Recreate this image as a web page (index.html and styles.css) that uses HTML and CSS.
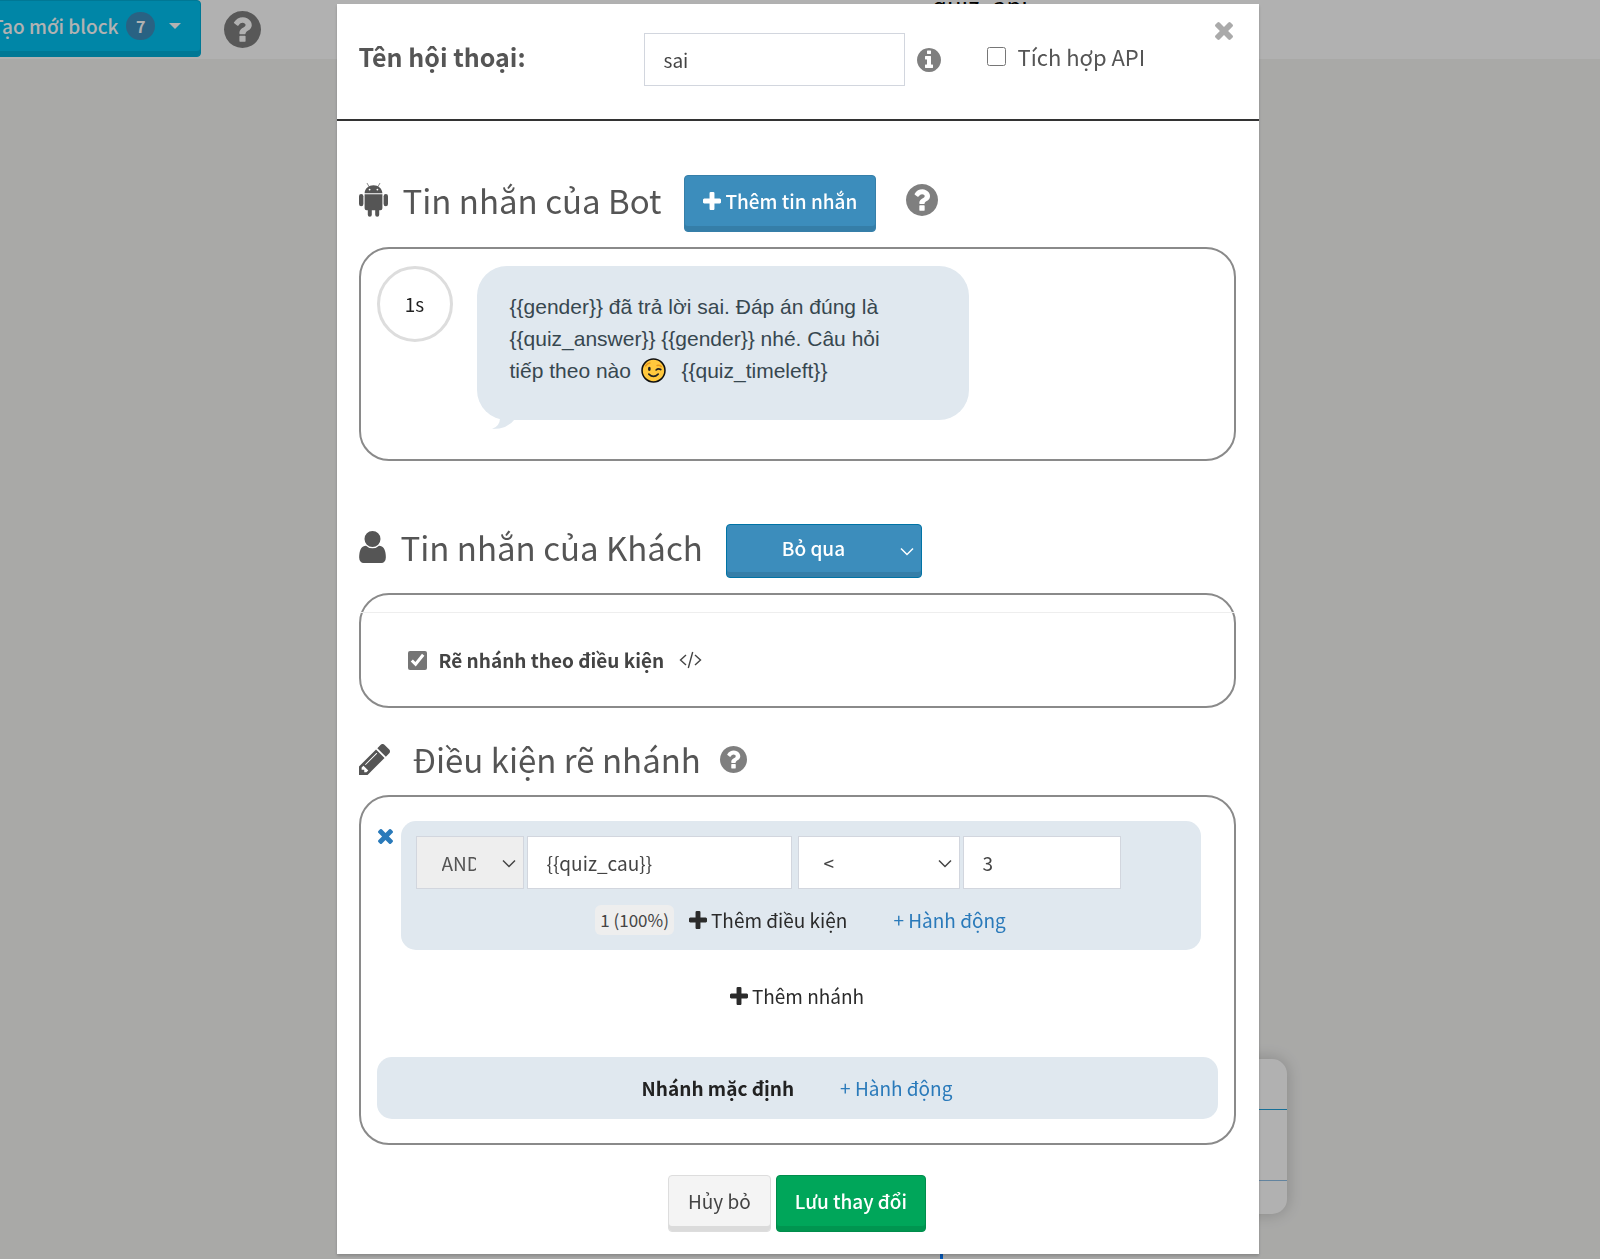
FILE: index.html
```html
<!DOCTYPE html>
<html lang="vi">
<head>
  <meta charset="UTF-8">
  <title>Hội thoại</title>
  <meta name="viewport" content="width=device-width, initial-scale=1.0">
  <link rel="stylesheet" href="styles.css">
</head>
<body>
  <svg class="sprite" aria-hidden="true">
    <symbol id="i-question" viewBox="128 128 1536 1536">
      <path d="M1024 1376v-192q0-14-9-23t-23-9h-192q-14 0-23 9t-9 23v192q0 14 9 23t23 9h192q14 0 23-9t9-23zm256-672q0-88-55.5-163t-138.500-116-170-41q-243 0-371 213-15 24 8 42l132 100q7 6 19 6 16 0 25-12 53-68 86-92 34-24 86-24 48 0 85.500 26t37.500 59q0 38-20 61t-68 45q-63 28-115.500 86.500t-52.500 125.500v36q0 14 9 23t23 9h192q14 0 23-9t9-23q0-19 21.500-49.500t54.500-49.500q32-18 49-28.500t46-35 44.500-48 28-60.500 12.500-81zm384 192q0 209-103 385.500t-279.500 279.500-385.500 103-385.500-103-279.500-279.500-103-385.500 103-385.500 279.500-279.500 385.500-103 385.500 103 279.500 279.500 103 385.500z"/>
    </symbol>
    <symbol id="i-info" viewBox="128 128 1536 1536">
      <path d="M1152 1376v-160q0-14-9-23t-23-9h-96v-512q0-14-9-23t-23-9h-320q-14 0-23 9t-9 23v160q0 14 9 23t23 9h96v320h-96q-14 0-23 9t-9 23v160q0 14 9 23t23 9h448q14 0 23-9t9-23zm-128-896v-160q0-14-9-23t-23-9h-192q-14 0-23 9t-9 23v160q0 14 9 23t23 9h192q14 0 23-9t9-23zm640 416q0 209-103 385.500t-279.500 279.500-385.500 103-385.500-103-279.500-279.500-103-385.500 103-385.500 279.500-279.500 385.500-103 385.500 103 279.500 279.500 103 385.500z"/>
    </symbol>
    <symbol id="i-plus" viewBox="192 128 1408 1408">
      <path d="M1600 736v192q0 40-28 68t-68 28h-416v416q0 40-28 68t-68 28h-192q-40 0-68-28t-28-68v-416h-416q-40 0-68-28t-28-68v-192q0-40 28-68t68-28h416v-416q0-40 28-68t68-28h192q40 0 68 28t28 68v416h416q40 0 68 28t28 68z"/>
    </symbol>
    <symbol id="i-times" viewBox="302 366 1188 1188">
      <path d="M1490 1322q0 40-28 68l-136 136q-28 28-68 28t-68-28l-294-294-294 294q-28 28-68 28t-68-28l-136-136q-28-28-28-68t28-68l294-294-294-294q-28-28-28-68t28-68l136-136q28-28 68-28t68 28l294 294 294-294q28-28 68-28t68 28l136 136q28 28 28 68t-28 68l-294 294 294 294q28 28 28 68z"/>
    </symbol>
    <symbol id="i-user" viewBox="256 128 1280 1536">
      <path d="M1536 1399q0 109-62.500 187t-150.500 78h-854q-88 0-150.500-78t-62.500-187q0-85 8.500-160.500t31.500-152 58.500-131 94-89 134.500-34.500q131 128 313 128t313-128q76 0 134.500 34.500t94 89 58.500 131 31.500 152 8.500 160.500zm-256-887q0 159-112.500 271.500t-271.500 112.500-271.500-112.500-112.500-271.500 112.500-271.500 271.500-112.500 271.500 112.500 112.500 271.500z"/>
    </symbol>
    <symbol id="i-pencil" viewBox="128 150 1515 1515">
      <path d="M491 1536l91-91-235-235-91 91v107h128v128h107zm523-928q0-22-22-22-10 0-17 7l-542 542q-7 7-7 17 0 22 22 22 10 0 17-7l542-542q7-7 7-17zm-54-192l416 416-832 832h-416v-416zm683 96q0 53-37 90l-166 166-416-416 166-165q36-38 90-38 53 0 91 38l235 234q37 39 37 91z"/>
    </symbol>
    <symbol id="i-android" viewBox="0 0 29 34">
      <path d="M8.200.4l1.700 3" fill="none" stroke="currentColor" stroke-width=".7" stroke-linecap="round"/>
      <path d="M20.800.4l-1.700 3" fill="none" stroke="currentColor" stroke-width=".7" stroke-linecap="round"/>
      <path fill-rule="evenodd" d="M5.600 10.300c.2-5 4.200-8 8.900-8s8.700 3 8.900 8zM10.600 5.700a.9.900 0 1 0 0 1.800.9.900 0 1 0 0-1.800zM18.400 5.700a.9.900 0 1 0 0 1.800.9.900 0 1 0 0-1.800z"/>
      <path d="M5.600 11.200h17.800v14q0 2-2 2h-1.200v4.600a2 2 0 0 1-4 0v-4.600h-3.400v4.600a2 2 0 0 1-4 0v-4.600h-1.200q-2 0-2-2z"/>
      <rect x="0" y="11" width="4.400" height="12.200" rx="2.200"/>
      <rect x="24.600" y="11" width="4.400" height="12.200" rx="2.200"/>
    </symbol>
    <symbol id="i-code" viewBox="0 0 23 18">
      <path d="M7 4L1.500 9 7 14M16 4l5.500 5L16 14M13.700 1L9.300 17" fill="none" stroke="currentColor" stroke-width="1.400"/>
    </symbol>
    <symbol id="i-chevron" viewBox="0 0 14 9">
      <path d="M1 1.500l6 6 6-6" fill="none" stroke="currentColor" stroke-width="1.500"/>
    </symbol>
    <symbol id="i-wink" viewBox="0 0 24 24">
      <circle cx="12" cy="12" r="11" fill="#ffc83d" stroke="#111" stroke-width="1.500"/>
      <path d="M4.500 7.500q1.500-2.500 4-2.700M15.500 7.200q2-.7 4 1" fill="none" stroke="#e8961e" stroke-width="1.500" stroke-linecap="round"/>
      <ellipse cx="8" cy="10.500" rx="1.300" ry="2" fill="#222"/>
      <path d="M14.500 11.500q2-2 4.500-.4M7.500 15.500q4.500 4.500 9 0" fill="none" stroke="#222" stroke-width="1.600" stroke-linecap="round"/>
    </symbol>
  </svg>

  <!-- editor page under the dialog -->
  <div class="page">
    <header class="topbar">
      <button class="btn btn-info btn-create" type="button">
        Tạo mới block <span class="badge">7</span><span class="caret"></span>
      </button>
      <svg class="icon help-lg"><use href="#i-question"/></svg>
    </header>
    <main class="canvas">
      <span class="node-name">quiz_api</span>
      <div class="node">
        <div class="node-title"></div>
        <div class="node-body"></div>
      </div>
      <span class="wire"></span>
    </main>
  </div>

  <div class="overlay">
    <form class="modal" role="dialog" aria-label="Hội thoại">
      <div class="modal-header">
        <label class="title" for="ten">Tên hội thoại:</label>
        <input class="field" type="text" id="ten" value="sai">
        <svg class="icon info"><use href="#i-info"/></svg>
        <label class="api"><input type="checkbox"> Tích hợp API</label>
        <button class="close" type="button" aria-label="Đóng"><svg class="icon"><use href="#i-times"/></svg></button>
      </div>

      <div class="modal-body">
        <div class="section-head head-bot">
          <svg class="icon android"><use href="#i-android"/></svg>
          <h3>Tin nhắn của Bot</h3>
          <button class="btn btn-primary" type="button"><svg class="icon plus"><use href="#i-plus"/></svg>Thêm tin nhắn</button>
          <svg class="icon help-md"><use href="#i-question"/></svg>
        </div>
        <div class="box box-bot">
          <span class="delay">1s</span>
          <div class="bubble">
            {{gender}} đã trả lời sai. Đáp án đúng là<br>
            {{quiz_answer}} {{gender}} nhé. Câu hỏi<br>
            tiếp theo nào <svg class="emoji"><use href="#i-wink"/></svg> &nbsp;{{quiz_timeleft}}
            <svg class="tail" viewBox="0 0 24 12"><path d="M8 0Q8 8 0 11Q16 11 23 1L23 0Z"/></svg>
          </div>
        </div>

        <div class="section-head head-guest">
          <svg class="icon user"><use href="#i-user"/></svg>
          <h3>Tin nhắn của Khách</h3>
          <span class="select select-primary">
            <select aria-label="Tin nhắn của Khách"><option>Bỏ qua</option></select>
            <svg class="chevron"><use href="#i-chevron"/></svg>
          </span>
        </div>
        <div class="box box-guest">
          <hr>
          <label class="branch"><input type="checkbox" checked> Rẽ nhánh theo điều kiện <svg class="icon code"><use href="#i-code"/></svg></label>
        </div>

        <div class="section-head head-branch">
          <svg class="icon pencil"><use href="#i-pencil"/></svg>
          <h3>Điều kiện rẽ nhánh</h3>
          <svg class="icon help-sm"><use href="#i-question"/></svg>
        </div>
        <div class="box box-branch">
          <div class="rule">
            <button class="remove" type="button" aria-label="Xóa nhánh"><svg class="icon"><use href="#i-times"/></svg></button>
            <div class="panel">
              <div class="fields">
                <span class="select select-and">
                  <select aria-label="Phép nối" disabled><option>AND</option></select>
                  <svg class="chevron"><use href="#i-chevron"/></svg>
                </span>
                <input class="field variable" type="text" aria-label="Biến" value="{{quiz_cau}}">
                <span class="select select-op">
                  <select aria-label="So sánh"><option>&lt;</option></select>
                  <svg class="chevron"><use href="#i-chevron"/></svg>
                </span>
                <input class="field value" type="text" aria-label="Giá trị" value="3">
              </div>
              <div class="actions">
                <span class="chip">1 (100%)</span>
                <button class="add" type="button"><svg class="icon plus"><use href="#i-plus"/></svg>Thêm điều kiện</button>
                <a class="action" href="#">+ Hành động</a>
              </div>
            </div>
          </div>
          <button class="add add-branch" type="button"><svg class="icon plus"><use href="#i-plus"/></svg>Thêm nhánh</button>
          <div class="default">
            <strong>Nhánh mặc định</strong>
            <a class="action" href="#">+ Hành động</a>
          </div>
        </div>

        <div class="modal-footer">
          <button class="btn btn-default" type="button">Hủy bỏ</button>
          <button class="btn btn-success" type="submit">Lưu thay đổi</button>
        </div>
      </div>
    </form>
  </div>
</body>
</html>
```

FILE: styles.css
```css
* {
  box-sizing: border-box;
}

body {
  margin: 0;
  font-family: "Source Sans Pro", "Noto Sans CJK JP", "Noto Sans", sans-serif;
  font-size: 19px;
  line-height: 28px;
  color: #333;
}

button, input, select {
  font: inherit;
  color: inherit;
  margin: 0;
}

button {
  cursor: pointer;
}

a {
  color: #2a7aba;
  text-decoration: none;
}

.sprite {
  position: absolute;
  width: 0;
  height: 0;
}

.icon {
  display: block;
  flex: none;
  fill: currentColor;
}

/* page under the dialog */
.page {
  display: flex;
  flex-direction: column;
  height: 100vh;
  overflow: hidden;
}

.topbar {
  display: flex;
  align-items: flex-start;
  height: 59px;
  background-color: #fefefe;
}

.canvas {
  position: relative;
  flex: 1;
  background-color: #f2f2f0;
}

.help-lg {
  width: 37px;
  height: 37px;
  margin: 11px 0 0 23px;
  color: #7f7f7f;
}

.node-name {
  position: absolute;
  left: 932px;
  top: -68px;
  font-size: 24px;
  color: #000;
}

.node {
  position: absolute;
  left: 940px;
  top: 1000px;
  width: 347px;
  height: 155px;
  border-radius: 15px;
  background-color: #fefefe;
  box-shadow: 0 0 16px rgba(0, 0, 0, 0.2);
}

.node-title {
  height: 51px;
  border-bottom: 1px solid #22a0d8;
}

.node-body {
  height: 71px;
  border-bottom: 1px solid #8ebde4;
}

.wire {
  position: absolute;
  left: 940px;
  bottom: 0;
  width: 3px;
  height: 20px;
  background-color: #0a7bff;
}

/* buttons */
.btn {
  display: flex;
  align-items: center;
  justify-content: center;
  height: 57px;
  padding: 0 18px 5px;
  border: 1px solid transparent;
  border-radius: 4px;
  box-shadow: inset 0 -5px 0 rgba(0, 0, 0, 0.1);
  font-weight: 500;
  color: #fff;
  white-space: nowrap;
}

.btn-info {
  background-color: #00c0ef;
  border-color: #00acd6;
}

.btn-create {
  width: 210px;
  margin-left: -9px;
  padding: 0 19px 6px 0;
  justify-content: flex-end;
}

.badge {
  margin: 0 12px 0 8px;
  width: 31px;
  border-radius: 14px;
  background-color: #3c8dbc;
  font-size: 16px;
  font-weight: bold;
  text-align: center;
}

.btn-create .badge {
  margin-right: 14px;
}

.caret {
  border: 6px solid transparent;
  border-top-color: #fff;
  border-bottom: 0;
}

.btn-primary {
  background-color: #3c8dbc;
  border-color: #367fa9;
}

.btn-default {
  padding: 0 19px 5px;
  background-color: #f4f4f4;
  border-color: #ddd;
  font-weight: normal;
  color: #444;
}

.btn-success {
  background-color: #00a65a;
  border-color: #008d4c;
}

.plus {
  width: 18px;
  height: 18px;
  margin-right: 4px;
}

/* dialog */
.overlay {
  position: fixed;
  inset: 0;
  overflow: auto;
  padding: 4px 5px 4px 0;
  background-color: rgba(0, 0, 0, 0.3);
}

.modal {
  max-width: 922px;
  margin: 0 auto;
  background-color: #fff;
  box-shadow: 0 2px 3px rgba(0, 0, 0, 0.2);
}

.modal-header {
  position: relative;
  display: flex;
  align-items: center;
  padding: 29px 23px 33px 22px;
  border-bottom: 2px solid #333;
}

.title {
  width: 285px;
  padding-bottom: 7px;
  font-size: 25px;
  font-weight: bold;
  color: #555;
}

.field {
  width: 261px;
  height: 53px;
  padding: 0 19px;
  border: 1px solid #d2d6de;
  border-radius: 0;
  background-color: #fff;
  color: #444;
}

.info {
  width: 24px;
  height: 24px;
  margin-left: 12px;
  color: #7f7f7f;
}

.api {
  display: flex;
  align-items: center;
  gap: 12px;
  margin-left: 46px;
  padding-bottom: 7px;
  font-size: 22px;
  color: #555;
}

input[type="checkbox"] {
  width: 19px;
  height: 19px;
  accent-color: #757575;
}

.close {
  position: absolute;
  top: 18px;
  right: 26px;
  padding: 0;
  border: 0;
  background: none;
  color: #aaa;
}

.close .icon {
  width: 18px;
  height: 18px;
}

.modal-body {
  padding: 0 23px 22px 22px;
}

.section-head {
  display: flex;
  align-items: center;
  color: #555;
}

.section-head h3 {
  margin: 0 23px 0 15px;
  font-size: 33px;
  line-height: 44px;
  font-weight: normal;
}

/* the controls hang below the heading line */
.section-head .btn,
.section-head .select {
  margin-bottom: -8px;
}

.head-bot {
  margin: 54px 0 23px;
}

.head-guest {
  margin: 63px 0 23px;
}

.head-branch {
  margin: 29px 0 14px;
}

.head-branch h3 {
  margin: 0 19px 0 23px;
}

.android {
  width: 29px;
  height: 34px;
}

.user {
  width: 27px;
  height: 32px;
}

.pencil {
  width: 31px;
  height: 31px;
}

.help-md {
  width: 32px;
  height: 32px;
  margin-left: 30px;
  color: #7f7f7f;
}

.help-sm {
  width: 27px;
  height: 27px;
  color: #7f7f7f;
}

.box {
  border: 2px solid #8a8a8a;
  border-radius: 30px;
}

.box-bot {
  display: flex;
  align-items: flex-start;
  gap: 24px;
  padding: 17px 16px 39px;
}

.delay {
  width: 76px;
  height: 76px;
  border: 3px solid #ddd;
  border-radius: 50%;
  line-height: 69px;
  text-align: center;
  color: #222;
}

.bubble {
  position: relative;
  width: 492px;
  padding: 25px 33px 33px;
  border-radius: 30px;
  background-color: #e0e8ef;
  font-family: "Liberation Sans", Arial, sans-serif;
  font-size: 21px;
  line-height: 32px;
  color: #37474f;
}

.emoji {
  width: 25px;
  height: 25px;
  margin: 0 4px;
  vertical-align: -5px;
}

.tail {
  position: absolute;
  left: 15px;
  top: 100%;
  margin-top: -2px;
  width: 24px;
  height: 12px;
  fill: #e0e8ef;
}

/* drop-downs */
.select {
  position: relative;
  display: block;
  flex: none;
  height: 53px;
  color: #444;
}

.select select {
  appearance: none;
  width: 100%;
  height: 100%;
  padding: 0 47px 0 25px;
  border: 1px solid #d2d6de;
  border-radius: 0;
  background-color: #fff;
  opacity: 1;
}

.chevron {
  position: absolute;
  right: 8px;
  top: 23px;
  width: 14px;
  height: 9px;
  pointer-events: none;
}

.select-primary {
  width: 196px;
  height: 54px;
  color: #fff;
}

.select-primary select {
  padding: 0 46px 6px 55px;
  border-color: #0073a5;
  border-radius: 4px;
  background-color: #3c8dbc;
  box-shadow: inset 0 -5px 0 rgba(0, 0, 0, 0.1);
  font-weight: 500;
}

.box-guest {
  padding: 17px 0 24px;
}

.box-guest hr {
  margin: 0;
  border: 0;
  border-top: 1px solid #eee;
}

.branch {
  display: flex;
  align-items: center;
  gap: 12px;
  margin: 33px 0 0 47px;
  padding-bottom: 8px;
  font-weight: bold;
  color: #444;
}

.code {
  width: 23px;
  height: 18px;
  margin-left: 3px;
}

.box-branch {
  padding: 24px 16px;
}

.rule {
  display: flex;
  align-items: flex-start;
  gap: 8px;
  padding: 0 17px 0 1px;
}

.remove {
  margin-top: 8px;
  padding: 0;
  border: 0;
  background: none;
  color: #2a7aba;
}

.remove .icon {
  width: 15px;
  height: 15px;
}

.panel {
  flex: 1;
  padding: 15px;
  border-radius: 15px;
  background-color: #e0e8ef;
}

.fields {
  display: flex;
  gap: 3px;
}

.select-and {
  width: 108px;
}

.select-and select {
  background-color: #eee;
  color: #555;
}

.variable {
  width: 265px;
}

.select-op {
  width: 162px;
  margin-left: 3px;
}

.value {
  width: 158px;
}

.actions {
  display: flex;
  align-items: center;
  justify-content: center;
  margin-top: 16px;
}

.chip {
  margin-right: 15px;
  padding: 1px 5px;
  border-radius: 6px;
  background-color: #eee;
  font-size: 17px;
  color: #444;
}

.add {
  display: flex;
  align-items: center;
  padding: 0;
  border: 0;
  background: none;
  color: #2b2b2b;
}

.action {
  margin-left: 46px;
}

.add-branch {
  margin: 32px auto 47px;
}

.default {
  display: flex;
  align-items: center;
  justify-content: center;
  height: 62px;
  border-radius: 15px;
  background-color: #e0e8ef;
  color: #222;
}

.modal-footer {
  display: flex;
  justify-content: center;
  gap: 5px;
  margin-top: 30px;
}
```
